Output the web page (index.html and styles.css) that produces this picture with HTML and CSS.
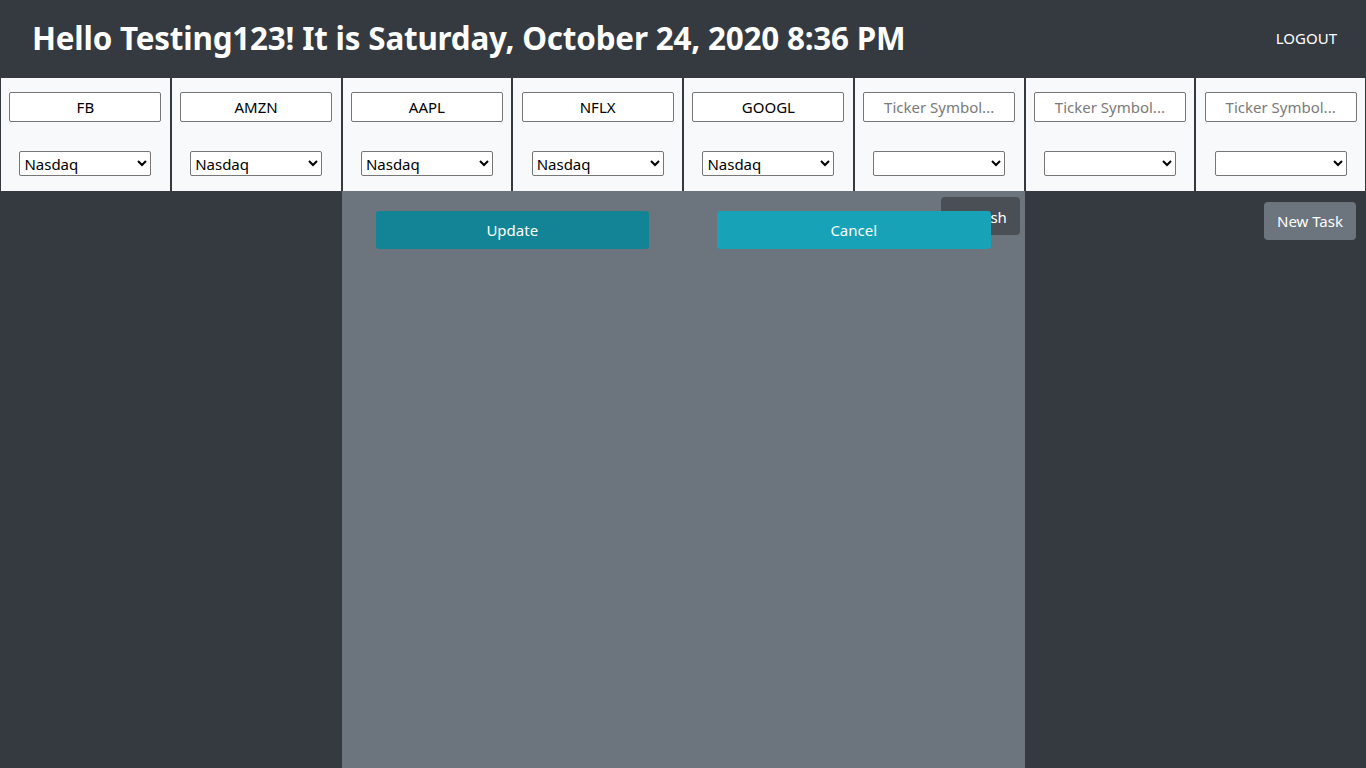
FILE: index.html
```html
<!DOCTYPE html>
<html lang="en">
<head>
<meta charset="utf-8">
<title>Dashboard</title>
<link rel="stylesheet" href="styles.css">
</head>
<body>
<header class="topbar">
  <h1 class="greeting">Hello Testing123! It is Saturday, October 24, 2020 8:36 PM</h1>
  <a class="logout" href="#">LOGOUT</a>
</header>
<section class="tickers">
  <div class="ticker">
    <input class="ticker-input" type="text" value="FB" placeholder="Ticker Symbol...">
    <select class="ticker-select"><option>Nasdaq</option><option>NYSE</option></select>
  </div>
  <div class="ticker">
    <input class="ticker-input" type="text" value="AMZN" placeholder="Ticker Symbol...">
    <select class="ticker-select"><option>Nasdaq</option><option>NYSE</option></select>
  </div>
  <div class="ticker">
    <input class="ticker-input" type="text" value="AAPL" placeholder="Ticker Symbol...">
    <select class="ticker-select"><option>Nasdaq</option><option>NYSE</option></select>
  </div>
  <div class="ticker">
    <input class="ticker-input" type="text" value="NFLX" placeholder="Ticker Symbol...">
    <select class="ticker-select"><option>Nasdaq</option><option>NYSE</option></select>
  </div>
  <div class="ticker">
    <input class="ticker-input" type="text" value="GOOGL" placeholder="Ticker Symbol...">
    <select class="ticker-select"><option>Nasdaq</option><option>NYSE</option></select>
  </div>
  <div class="ticker">
    <input class="ticker-input" type="text" placeholder="Ticker Symbol...">
    <select class="ticker-select"><option></option><option>Nasdaq</option><option>NYSE</option></select>
  </div>
  <div class="ticker">
    <input class="ticker-input" type="text" placeholder="Ticker Symbol...">
    <select class="ticker-select"><option></option><option>Nasdaq</option><option>NYSE</option></select>
  </div>
  <div class="ticker">
    <input class="ticker-input" type="text" placeholder="Ticker Symbol...">
    <select class="ticker-select"><option></option><option>Nasdaq</option><option>NYSE</option></select>
  </div>
</section>
<main class="board">
  <div class="col-side"></div>
  <div class="col-center">
    <div class="center-tools">
      <button class="btn btn-refresh" type="button">Refresh</button>
    </div>
    <div class="edit-actions">
      <div class="action-cell"><button class="btn btn-update" type="button">Update</button></div>
      <div class="action-cell"><button class="btn btn-cancel" type="button">Cancel</button></div>
    </div>
  </div>
  <div class="col-side col-right">
    <button class="btn btn-new" type="button">New Task</button>
  </div>
</main>
</body>
</html>
```

FILE: styles.css
```css
* { box-sizing: border-box; }
html, body { margin: 0; padding: 0; }
body {
  background: #343a40;
  font-family: "Noto Sans", "Open Sans", sans-serif;
  color: #212529;
  height: 768px;
  overflow: hidden;
  display: flex;
  flex-direction: column;
}
.topbar {
  height: 78px;
  flex: none;
  display: flex;
  align-items: center;
  justify-content: space-between;
  padding: 0 29px 0 32px;
  background: #343a40;
}
.greeting {
  margin: 0;
  color: #fff;
  font-size: 31.4px;
  font-weight: 700;
  letter-spacing: -0.2px;
  line-height: 1;
  padding-bottom: 2px;
  white-space: nowrap;
}
.logout {
  color: #fff;
  text-decoration: none;
  font-size: 15px;
  margin-bottom: 2px;
}
.tickers {
  flex: none;
  display: grid;
  grid-template-columns: repeat(8, 1fr);
  height: 113px;
}
.ticker {
  background: #f8f9fa;
  border-left: 1px solid #343a40;
  border-right: 1px solid #343a40;
  padding: 14px 8px 0;
  display: flex;
  flex-direction: column;
  align-items: center;
}
.ticker-input {
  width: 152px;
  height: 30px;
  border: 1px solid #767676;
  border-radius: 2px;
  background: #fff;
  font-family: inherit;
  font-size: 15px;
  text-align: center;
  color: #000;
  padding: 0 4px;
}
.ticker-input::placeholder { color: #7a7a7a; }
.ticker-select {
  margin-top: 29px;
  width: 132px;
  height: 25px;
  border: 1px solid #767676;
  border-radius: 2px;
  background: #fff;
  font-family: inherit;
  font-size: 15px;
  color: #000;
  padding: 0;
}
.board {
  flex: 1;
  display: grid;
  grid-template-columns: 1fr 2fr 1fr;
}
.col-center {
  background: #6c757d;
  position: relative;
  padding: 6px 5px 0 0;
}
.center-tools {
  display: flex;
  justify-content: flex-end;
}
.col-right {
  display: flex;
  justify-content: flex-end;
  align-items: flex-start;
  padding: 11px 10px 0 0;
}
.btn {
  font-family: inherit;
  font-size: 15px;
  color: #fff;
  border: 1px solid transparent;
  border-radius: 4px;
  height: 38px;
  padding: 0 10px;
  cursor: pointer;
  line-height: 1;
  white-space: nowrap;
}
.btn-refresh { background: #494f55; width: 79px; padding-top: 3px; }
.btn-new { background: #6c757d; width: 92px; }
.edit-actions {
  position: absolute;
  left: 0;
  right: 0;
  top: 20px;
  display: grid;
  grid-template-columns: 1fr 1fr;
}
.action-cell { padding: 0 34px; }
.action-cell .btn { width: 100%; border-radius: 3px; }
.btn-update { background: #138496; }
.btn-cancel { background: #17a2b8; }
```
